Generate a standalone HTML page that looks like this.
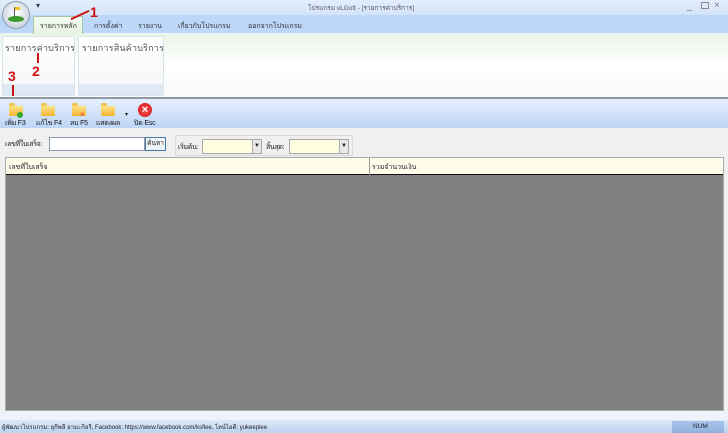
<!DOCTYPE html>
<html><head><meta charset="utf-8"><style>
*{margin:0;padding:0;box-sizing:border-box}
body{width:728px;height:433px;overflow:hidden;position:relative;font-family:"Liberation Sans","Noto Sans CJK SC",sans-serif;font-size:7px;color:#222;background:#eef3fa}
.a{position:absolute;white-space:nowrap}
.fold{position:absolute;width:14px;height:10px;background:linear-gradient(#fde38a,#f2b632);border-radius:1px}
.fold:before{content:"";position:absolute;left:0;top:-3px;width:6px;height:3px;background:#f2c453;border-radius:1px 1px 0 0}
.tb{position:absolute;top:118px;font-size:7px;color:#111;letter-spacing:-0.2px}
</style></head><body>
<div class="a" style="left:0;top:0;width:728px;height:15px;background:linear-gradient(#e4eefb,#d3e3f7)"></div>
<div class="a" style="left:36px;top:1px;font-size:8px;color:#335">&#9662;</div>
<div class="a" style="left:308px;top:3px;font-size:6.5px;color:#556">โปรแกรม vLGoft - [รายการค่าบริการ]</div>
<div class="a" style="left:687px;top:1px;font-size:9px;color:#667">_</div>
<div class="a" style="left:701px;top:2px;width:8px;height:7px;border:1px solid #889"></div>
<div class="a" style="left:714px;top:0px;font-size:10px;color:#778">×</div>
<div class="a" style="left:0;top:15px;width:728px;height:18px;background:#bcd7f8"></div>
<div class="a" style="left:2px;top:1px;width:28px;height:28px;border-radius:50%;background:radial-gradient(circle at 50% 40%,#fff,#cfd8e0 70%,#8a98a8);border:1px solid #8a9bb0"></div>
<div class="a" style="left:8px;top:16px;width:16px;height:6px;border-radius:50%;background:#3a9a2a"></div>
<div class="a" style="left:14px;top:7px;width:1px;height:10px;background:#555"></div>
<div class="a" style="left:15px;top:7px;width:5px;height:3px;background:#f0c020"></div>
<div class="a" style="left:33px;top:16px;width:50px;height:18px;background:linear-gradient(#f4fbf1,#e6f3e2);border:1px solid #a9c4a2;border-bottom:none"></div>
<div class="a" style="left:40px;top:21px;color:#333">รายการหลัก</div>
<div class="a" style="left:94px;top:21px;color:#333">การตั้งค่า</div>
<div class="a" style="left:138px;top:21px;color:#333">รายงาน</div>
<div class="a" style="left:178px;top:21px;color:#333">เกี่ยวกับโปรแกรม</div>
<div class="a" style="left:248px;top:21px;color:#333">ออกจากโปรแกรม</div>
<div class="a" style="left:90px;top:4px;font-size:14px;font-weight:bold;color:#d01010">1</div>
<div class="a" style="left:70px;top:14px;width:20px;height:2px;background:#d01010;transform:rotate(-25deg)"></div>
<div class="a" style="left:0;top:34px;width:728px;height:63px;background:linear-gradient(#e9f5e6,#fff 50%,#f7f9fb)"></div>
<div class="a" style="left:2px;top:36px;width:73px;height:60px;background:linear-gradient(#fff,#f3f6f8);border:1px solid #dbe3ea;border-radius:2px"></div>
<div class="a" style="left:3px;top:84px;width:71px;height:11px;background:#dfe9f3"></div>
<div class="a" style="left:78px;top:36px;width:86px;height:60px;background:linear-gradient(#fff,#f3f6f8);border:1px solid #dbe3ea;border-radius:2px"></div>
<div class="a" style="left:79px;top:84px;width:84px;height:11px;background:#dfe9f3"></div>
<div class="a" style="left:5px;top:41px;font-size:9px;color:#555;letter-spacing:0.2px">รายการค่าบริการ</div>
<div class="a" style="left:82px;top:41px;font-size:9px;color:#555;letter-spacing:0.2px">รายการสินค้าบริการ</div>
<div class="a" style="left:32px;top:63px;font-size:14px;font-weight:bold;color:#d01010">2</div>
<div class="a" style="left:37px;top:53px;width:2px;height:10px;background:#d01010"></div>
<div class="a" style="left:8px;top:68px;font-size:14px;font-weight:bold;color:#d01010">3</div>
<div class="a" style="left:12px;top:85px;width:2px;height:11px;background:#d01010"></div>
<div class="a" style="left:0;top:97px;width:728px;height:2px;background:#8d99a6"></div>
<div class="a" style="left:0;top:99px;width:728px;height:29px;background:linear-gradient(#e6f0fd,#bcd6f6)"></div>
<div class="fold" style="left:9px;top:106px"></div><div class="a" style="left:17px;top:112px;width:6px;height:6px;border-radius:50%;background:#3a3"></div>
<div class="fold" style="left:41px;top:106px"></div>
<div class="fold" style="left:72px;top:106px"></div><div class="a" style="left:80px;top:110px;color:#d33;font-size:8px">×</div>
<div class="fold" style="left:101px;top:106px"></div>
<div class="a" style="left:138px;top:103px;width:14px;height:14px;border-radius:50%;background:radial-gradient(#f55,#c11);color:#fff;font-size:11px;font-weight:bold;text-align:center;line-height:14px">×</div>
<div class="tb" style="left:5px">เพิ่ม F3</div>
<div class="tb" style="left:36px">แก้ไข F4</div>
<div class="tb" style="left:70px">ลบ F5</div>
<div class="tb" style="left:96px">แสดงผล</div>
<div class="a" style="left:125px;top:111px;font-size:6px">▾</div>
<div class="tb" style="left:134px">ปิด Esc</div>
<div class="a" style="left:0;top:128px;width:728px;height:283px;background:#f0f0f0"></div>
<div class="a" style="left:5px;top:139px;letter-spacing:-0.3px">เลขที่ใบเสร็จ:</div>
<div class="a" style="left:49px;top:137px;width:96px;height:14px;background:#fff;border:1px solid #8a9aaa"></div>
<div class="a" style="left:145px;top:137px;width:21px;height:14px;background:#eef3f8;border:1px solid #4a7aa8;font-size:6.5px;text-align:center;line-height:12px">ค้นหา</div>
<div class="a" style="left:175px;top:135px;width:178px;height:21px;border:1px solid #d8d8d8;border-radius:2px"></div>
<div class="a" style="left:178px;top:142px;letter-spacing:-0.3px">เริ่มต้น:</div>
<div class="a" style="left:202px;top:139px;width:60px;height:15px;background:#fffde0;border:1px solid #a8a8a8"></div>
<div class="a" style="left:252px;top:140px;width:9px;height:13px;background:#e8e8e8;border-left:1px solid #aaa;font-size:6px;text-align:center;line-height:13px">▼</div>
<div class="a" style="left:266px;top:142px;letter-spacing:-0.3px">สิ้นสุด:</div>
<div class="a" style="left:289px;top:139px;width:60px;height:15px;background:#fffde0;border:1px solid #a8a8a8"></div>
<div class="a" style="left:339px;top:140px;width:9px;height:13px;background:#e8e8e8;border-left:1px solid #aaa;font-size:6px;text-align:center;line-height:13px">▼</div>
<div class="a" style="left:5px;top:157px;width:719px;height:254px;background:#808080;border:1px solid #aaa"></div>
<div class="a" style="left:6px;top:158px;width:717px;height:17px;background:#fffdea;border-bottom:1px solid #111"></div>
<div class="a" style="left:369px;top:158px;width:1px;height:17px;background:#999"></div>
<div class="a" style="left:9px;top:162px;color:#223">เลขที่ใบเสร็จ</div>
<div class="a" style="left:372px;top:162px;color:#223">รวมจำนวนเงิน</div>
<div class="a" style="left:0;top:420px;width:728px;height:13px;background:linear-gradient(#dde9f8,#bcd2ee)"></div>
<div class="a" style="left:2px;top:422px;font-size:6px;color:#223">ผู้พัฒนาโปรแกรม: ยุกีพลี อามะกีอรี, Facebook: https://www.facebook.com/ksflee, ไลน์ไอดี: yukeeplee</div>
<div class="a" style="left:672px;top:421px;width:52px;height:12px;background:linear-gradient(#a9c6ea,#8fb1de)"></div>
<div class="a" style="left:693px;top:423px;font-size:6.5px;color:#223">NUM</div>
</body></html>
